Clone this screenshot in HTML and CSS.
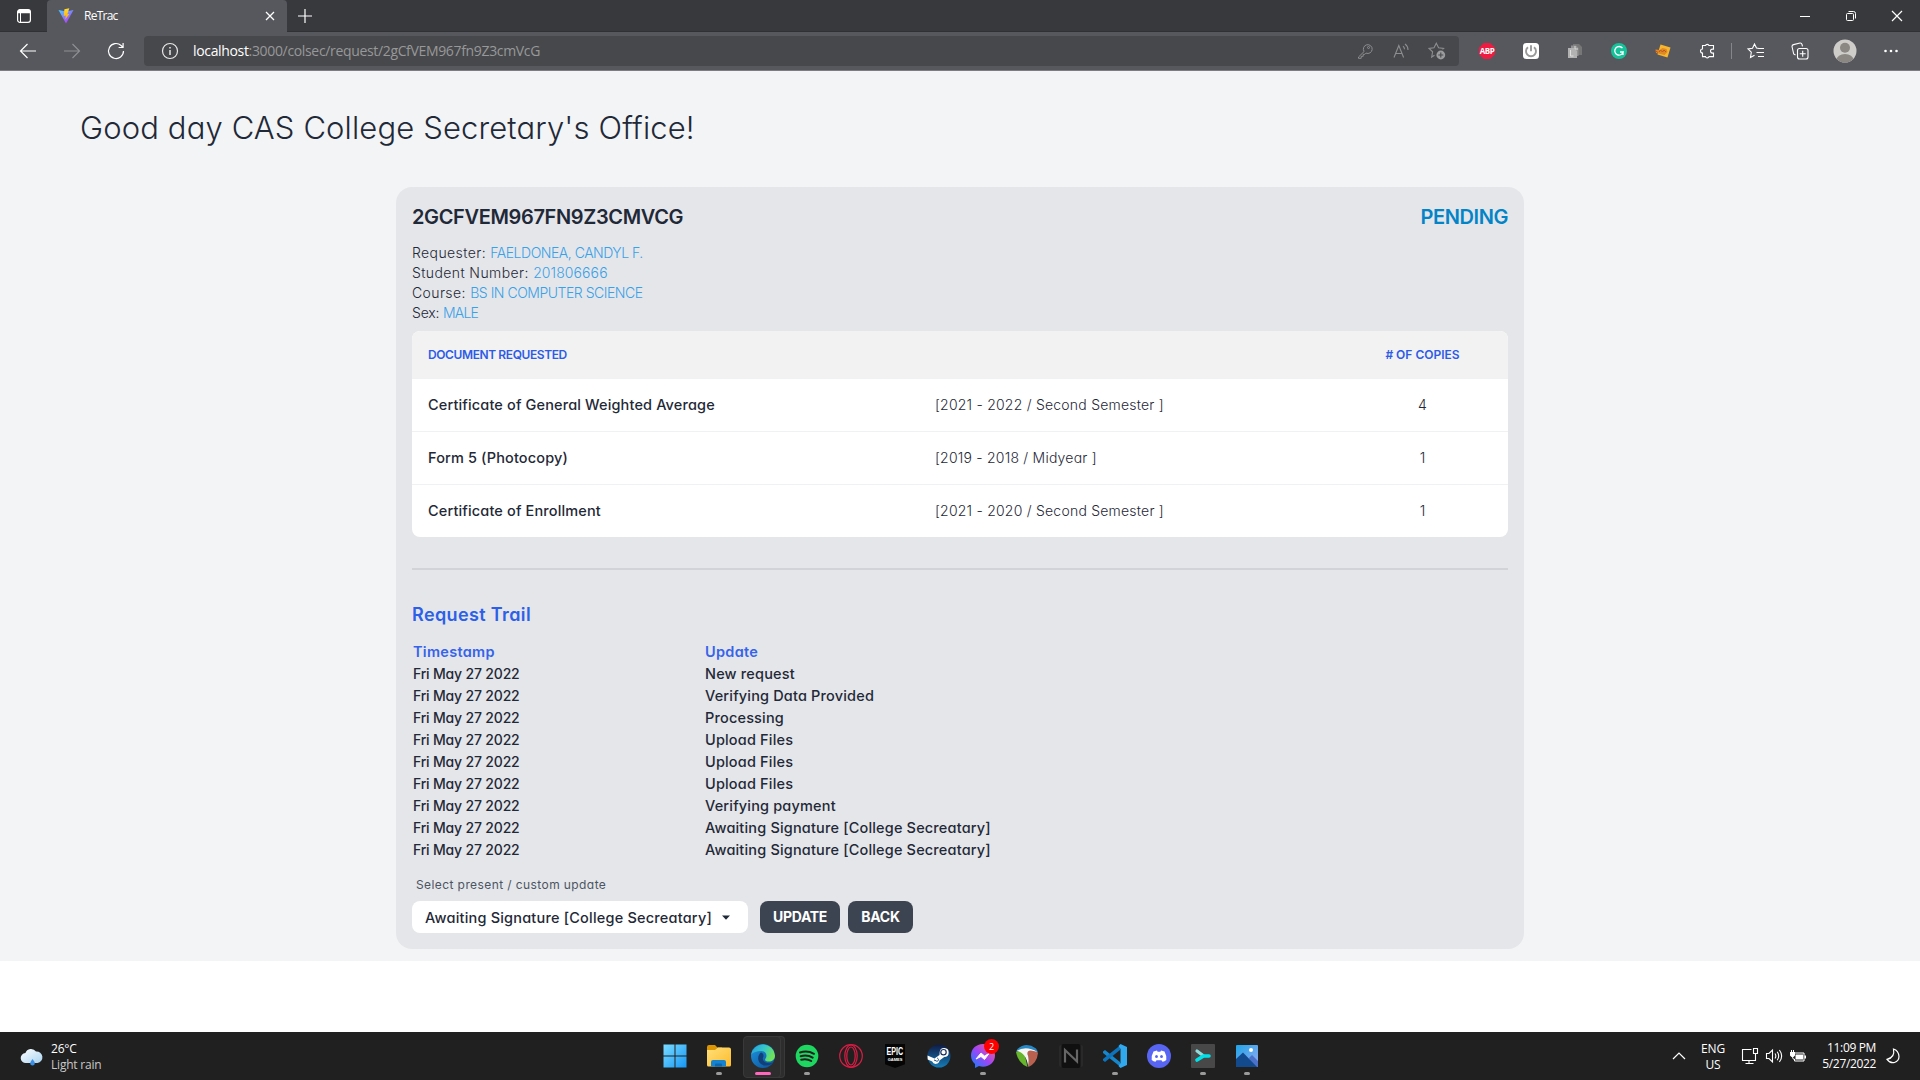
FILE: index.html
```html
<!DOCTYPE html>
<html lang="en">
<head>
<meta charset="utf-8">
<title>ReTrac</title>
<link rel="stylesheet" href="styles.css">
</head>
<body>
<header class="browser">
  <div class="tabstrip">
    <div class="tab-actions"><svg width="16" height="16" viewBox="0 0 16 16"><rect x="1.6" y="1.6" width="12.8" height="12.8" rx="2.4" fill="none" stroke="#fff" stroke-width="1.2"/><path d="M1.5 5.2V4a2.500 2.500 0 0 1 2.500-2.500h8a2.500 2.500 0 0 1 2.500 2.500v1.200z" fill="#fff"/><path d="M4.500 5v9.500" stroke="#fff"/></svg></div>
    <div class="tab">
      <svg width="16" height="16" viewBox="0 0 16 16"><defs><linearGradient id="vite" x1="0" y1="0" x2="0.7" y2="1"><stop offset="0" stop-color="#41d1ff"/><stop offset="1" stop-color="#bd34fe"/></linearGradient><linearGradient id="bolt" x1="0" y1="0" x2="0" y2="1"><stop offset="0" stop-color="#ffdd35"/><stop offset="1" stop-color="#ffa800"/></linearGradient></defs><path d="M.5 2 8 15.500 15.500 2 8 3.400z" fill="url(#vite)"/><path d="M11.300.3 6.400 1.300 5.700 8l2.100-.4-.5 3.900 4-5.500-2 .3z" fill="url(#bolt)"/></svg>
      <span class="tab-title">ReTrac</span>
      <svg class="tab-close" width="10" height="10" viewBox="0 0 10 10"><path d="m1 1 8 8M9 1 1 9" stroke="#fff" stroke-width="1.300"/></svg>
    </div>
    <div class="new-tab"><svg width="16" height="16" viewBox="0 0 16 16"><path d="M8 1v14M1 8h14" stroke="#fff" stroke-width="1.200"/></svg></div>
    <div class="window-controls">
      <span><svg width="12" height="12" viewBox="0 0 12 12"><path d="M1 6.500h10" stroke="#fff"/></svg></span>
      <span><svg width="12" height="12" viewBox="0 0 12 12" fill="none" stroke="#fff"><rect x="1.500" y="3.500" width="7" height="7" rx="1"/><path d="M3.500 1.500h5a2 2 0 0 1 2 2v5"/></svg></span>
      <span><svg width="12" height="12" viewBox="0 0 12 12"><path d="m1 1 10 10M11 1 1 11" stroke="#fff" stroke-width="1.200"/></svg></span>
    </div>
  </div>
  <div class="toolbar">
    <nav class="nav-buttons">
      <span><svg width="18" height="16" viewBox="0 0 18 16" fill="none" stroke="#fff" stroke-width="1.200"><path d="M17 8H1.500M8.500 1l-7 7 7 7"/></svg></span>
      <span><svg width="18" height="16" viewBox="0 0 18 16" fill="none" stroke="#8e8f93" stroke-width="1.200"><path d="M1 8h15.500M9.500 1l7 7-7 7"/></svg></span>
      <span><svg width="18" height="18" viewBox="0 0 18 18" fill="none" stroke="#fff" stroke-width="1.200"><path d="M16.500 9a7.500 7.500 0 1 1-2.400-5.500l2 2M16.100 1v4.500h-4.500"/></svg></span>
    </nav>
    <div class="address">
      <svg class="info" width="18" height="18" viewBox="0 0 18 18" fill="none" stroke="#e8e8e8" stroke-width="1.200"><circle cx="9" cy="9" r="7.500"/><path d="M9 8v5M9 5v1.400" stroke-width="1.500"/></svg>
      <span class="url"><b>localhost</b>:3000/colsec/request/2gCfVEM967fn9Z3cmVcG</span>
      <div class="address-icons">
        <span><svg width="16" height="16" viewBox="0 0 16 16" fill="none" stroke="#8d8e90"><path d="M7.100 8.500 1.500 14v1.300h2.700v-2h2v-2h1.700l1.100-1.200A4.400 4.400 0 1 0 7.100 8.500z"/><circle cx="11.500" cy="4.500" r="1"/></svg></span>
        <span><svg width="18" height="16" viewBox="0 0 18 16" fill="none" stroke="#8d8e90" stroke-width="1.100"><path d="m2 14.500 4.800-12 4.800 12M3.600 10.500H10M11 3.200q1.500 1 1.500 3M13 1q3 2 3 6"/></svg></span>
        <span><svg width="18" height="18" viewBox="0 0 18 18"><path d="M6.500 13.200 3.700 15l.9-5.200L1 6.400l5-.7L8.300 1.200l2.300 4.500 5 .7-1.100 1" fill="none" stroke="#8d8e90" stroke-width="1.100"/><circle cx="12.800" cy="13" r="4.400" fill="#9b9c9e"/><path d="M12.800 10.500v5M10.300 13h5" stroke="#48494c" stroke-width="1.100"/></svg></span>
      </div>
    </div>
    <div class="extensions">
      <span><i class="abp">ABP</i></span>
      <span><svg width="16" height="16" viewBox="0 0 16 16"><rect width="16" height="16" rx="3.500" fill="#fff"/><path d="M5 4.200a5 5 0 1 0 6 0M8 2.200v6" fill="none" stroke="#999" stroke-width="1.900"/></svg></span>
      <span><svg width="16" height="16" viewBox="0 0 16 16"><path d="M6 1h6l3 3v8H6z" fill="#777"/><path d="M4 2.500h5l2.500 2.500v8H4z" fill="#929292"/><path d="M1 5h6l3 3v7H1z" fill="#b2b2b2"/><path d="M3.500 7v6h3M8 3v3h3" stroke="#dedede" fill="none"/></svg></span>
      <span><svg width="16" height="16" viewBox="0 0 16 16"><circle cx="8" cy="8" r="8" fill="#15c39a"/><path d="M11.500 5.200A4.300 4.300 0 1 0 12.200 9H9M12 12V9" fill="none" stroke="#fff" stroke-width="1.300"/></svg></span>
      <span><svg width="16" height="16" viewBox="0 0 16 16"><path d="m5.500 1.500 10 3-3 10-10-3z" fill="#f8b62c"/><path d="m.5 6.500 4 .5 3-2 4 1 1 3-3 3-4-1-4.500-1z" fill="#dd8a25"/><path d="m4 9 1.500-2 2 2 1.500-2 2 2M0 7.500l3 2" fill="none" stroke="#c2541e"/></svg></span>
      <span><svg width="16" height="16" viewBox="0 0 16 16"><path d="M3.500 2.500h3a1.800 1.500 0 0 1 3.500 0h4.500v3.600h-1a2 2 0 0 0 0 4h1v3.500H10a1.800 1.700 0 0 1-3.500 0h-3V10a2 2 0 0 1 0-4z" fill="none" stroke="#fff" stroke-width="1.100"/></svg></span>
    </div>
    <div class="browser-actions">
      <span><svg width="18" height="16" viewBox="0 0 18 16" fill="none" stroke="#fff" stroke-width="1.100"><path d="M12 5.500 9.500 5l-2-4-2 4.300-4.500.6 3.300 3.200-.8 5.400 4-2.300M11 5.500h6M9.500 9.500H17M11 13.500h6"/></svg></span>
      <span><svg width="18" height="18" viewBox="0 0 18 18" fill="none" stroke="#fff" stroke-width="1.100"><rect x="6.500" y="6.500" width="10.500" height="10.500" rx="2"/><path d="M11.700 8.700v6M8.700 11.700h6M4.500 13 2.700 12 1 4.500Q1 3 2.500 2.600L9 1q1.500-.2 2 1.300l.5 2"/></svg></span>
      <span><svg width="24" height="24" viewBox="0 0 24 24"><defs><clipPath id="avatar"><circle cx="12" cy="12" r="11.500"/></clipPath></defs><g clip-path="url(#avatar)"><path d="M0 0h24v24H0z" fill="#cfcdca"/><circle cx="12" cy="8.800" r="5" fill="#8b8783"/><ellipse cx="12" cy="21" rx="8.500" ry="6" fill="#8b8783"/></g></svg></span>
      <span><svg width="16" height="4" viewBox="0 0 16 4" fill="#fff"><circle cx="2.500" cy="2" r="1.300"/><circle cx="8" cy="2" r="1.300"/><circle cx="13.500" cy="2" r="1.300"/></svg></span>
    </div>
  </div>
</header>

<main class="page">
  <h1 class="greeting">Good day CAS College Secretary's Office!</h1>
  <section class="card">
    <div class="card-head"><h2>2GCFVEM967FN9Z3CMVCG</h2><strong class="status">PENDING</strong></div>
    <div class="details">
      <p>Requester: <em>FAELDONEA, CANDYL F.</em></p>
      <p>Student Number: <em class="digits">201806666</em></p>
      <p>Course: <em>BS IN COMPUTER SCIENCE</em></p>
      <p class="sex">Sex: <em>MALE</em></p>
    </div>
    <div class="documents">
      <div class="doc-row doc-head"><span>DOCUMENT REQUESTED</span><span></span><span class="copies">#&nbsp;OF COPIES</span></div>
      <div class="doc-row"><span class="doc-name">Certificate of General Weighted Average</span><span>[2021 - 2022 / Second Semester ]</span><span class="copies">4</span></div>
      <div class="doc-row"><span class="doc-name">Form 5 (Photocopy)</span><span>[2019 - 2018 / Midyear ]</span><span class="copies">1</span></div>
      <div class="doc-row"><span class="doc-name">Certificate of Enrollment</span><span>[2021 - 2020 / Second Semester ]</span><span class="copies">1</span></div>
    </div>
    <div class="divider"></div>
    <h3 class="trail-title">Request Trail</h3>
    <div class="trail">
      <b>Timestamp</b><b>Update</b>
      <time>Fri May 27 2022</time><span>New request</span>
      <time>Fri May 27 2022</time><span>Verifying Data Provided</span>
      <time>Fri May 27 2022</time><span>Processing</span>
      <time>Fri May 27 2022</time><span>Upload Files</span>
      <time>Fri May 27 2022</time><span>Upload Files</span>
      <time>Fri May 27 2022</time><span>Upload Files</span>
      <time>Fri May 27 2022</time><span>Verifying payment</span>
      <time>Fri May 27 2022</time><span>Awaiting Signature [College Secreatary]</span>
      <time>Fri May 27 2022</time><span>Awaiting Signature [College Secreatary]</span>
    </div>
    <p class="field-label">Select present / custom update</p>
    <div class="actions">
      <div class="select"><span>Awaiting Signature [College Secreatary]</span><svg width="8" height="5" viewBox="0 0 8 5"><path d="M0 .5h8L4 4.800z" fill="#1f2937"/></svg></div>
      <button class="btn btn-update">UPDATE</button>
      <button class="btn btn-back">BACK</button>
    </div>
  </section>
</main>

<footer class="taskbar">
  <div class="weather">
    <svg width="24" height="20" viewBox="0 0 24 20"><defs><linearGradient id="cloud" x1="0" y1="0" x2="1" y2="1"><stop offset="0" stop-color="#fff"/><stop offset="1" stop-color="#a9d3f0"/></linearGradient></defs><path d="M6 16a5 5 0 0 1-.6-10A6 6 0 0 1 16 4.500 5.800 5.800 0 0 1 17.500 16z" fill="url(#cloud)"/><path d="M12.500 12q2.500 3 2.300 4.300a2.300 2.300 0 0 1-4.600 0Q10.200 15 12.500 12z" fill="#3b8fe4"/></svg>
    <p><span>26°C</span><span class="muted">Light rain</span></p>
  </div>
  <div class="apps">
    <span class="app"><svg width="24" height="24" viewBox="0 0 24 24"><defs><linearGradient id="win" x1="0" y1="0" x2="1" y2="1"><stop offset="0" stop-color="#7bdcff"/><stop offset="1" stop-color="#1597f5"/></linearGradient></defs><path d="M.5.500h11v11H.5zM12.500.500h11v11h-11zM.5 12.500h11v11H.5zM12.500 12.500h11v11h-11z" fill="url(#win)"/></svg></span>
    <span class="app running"><svg width="24" height="24" viewBox="0 0 24 24"><defs><linearGradient id="folder" x1="0" y1="0" x2="1" y2="1"><stop offset="0" stop-color="#ffe07a"/><stop offset="1" stop-color="#fdbb2c"/></linearGradient></defs><path d="M0 3q0-2 2-2h6l2.500 2.500H15V8H0z" fill="#dc9503"/><path d="M0 6h8l3-2.500h11q2 0 2 2V21q0 1.500-1.500 1.500h-21Q0 22.500 0 21z" fill="url(#folder)"/><path d="M4 22.500V18q0-2 2-2h11q2 0 2 2v4.500z" fill="#1683d1"/><path d="M8 22.500v-2q0-1 1-1h5q1 0 1 1v2z" fill="#0b67ad"/></svg></span>
    <span class="app running active"><svg width="24" height="24" viewBox="0 0 24 24"><defs><linearGradient id="edge1" x1="0" y1="0" x2="1" y2=".4"><stop offset="0" stop-color="#269edd"/><stop offset=".55" stop-color="#35c6c9"/><stop offset="1" stop-color="#6de25b"/></linearGradient><linearGradient id="edge2" x1="0" y1="0" x2="1" y2="1"><stop offset="0" stop-color="#1c96df"/><stop offset="1" stop-color="#0c4e98"/></linearGradient></defs><circle cx="12" cy="12" r="12" fill="url(#edge2)"/><path d="M.2 10.500A12 12 0 0 1 24 11.500c0 4-3 6-6 6-3.500 0-4.500-1.500-3.600-2.700 2.600-3.500.2-7.800-4.200-7.800C6 7 2 8.500.2 10.500z" fill="url(#edge1)"/><path d="M10 8.500c-3 2-4.500 8 0 11.500 4 3 9.500 1.500 12.500-1.700-2.500 1.200-6 1.400-8.300 0-2-1.300-3-3-2-5 .8-1.600.2-4.500-2.200-4.800z" fill="#123f77"/><path d="M22.700 17.800q1 .2.300 1l-1.800 1.800 3 1V15z" fill="#2d2d2e"/></svg></span>
    <span class="app running"><svg width="24" height="24" viewBox="0 0 24 24"><circle cx="12" cy="12" r="11.300" fill="#1ed760"/><path d="M5 8.500q7.500-2.300 14 1.300M5.700 12.200q6.500-1.800 12 1.400M6.200 15.700q5.500-1.500 10 1.300" fill="none" stroke="#202020" stroke-width="2" stroke-linecap="round"/></svg></span>
    <span class="app"><svg width="24" height="24" viewBox="0 0 24 24" fill="none" stroke="#da1d45" stroke-width="1.200"><circle cx="12" cy="12" r="11.300"/><ellipse cx="12" cy="12" rx="6.200" ry="11"/><ellipse cx="12" cy="12" rx="4.200" ry="9"/></svg></span>
    <span class="app"><span class="epic"><b>EPIC</b><small>GAMES</small></span></span>
    <span class="app"><svg width="24" height="24" viewBox="0 0 24 24"><defs><linearGradient id="steam" x1="0" y1="0" x2="0" y2="1"><stop offset="0" stop-color="#101b45"/><stop offset="1" stop-color="#147cb5"/></linearGradient></defs><circle cx="12" cy="12" r="11.500" fill="url(#steam)"/><path d="m.5 11.500 7 3 5-3.500.2-3a4.500 4.500 0 1 1 4.500 5l-4.700 3.500a3.800 3.800 0 0 1-7.300 1L.7 15.500z" fill="#fff"/><circle cx="16.500" cy="8.200" r="2.700" fill="#fff" stroke="#17315f" stroke-width="1.200"/><path d="m7 16 2 .8a1.500 1.500 0 1 0 1-2.600" fill="none" stroke="#17548b"/></svg></span>
    <span class="app running"><svg width="24" height="24" viewBox="0 0 24 24"><defs><linearGradient id="msgr" x1="0" y1="1" x2="1" y2="0"><stop offset="0" stop-color="#0a83ff"/><stop offset=".5" stop-color="#a044f5"/><stop offset="1" stop-color="#ff6874"/></linearGradient></defs><path d="M12 0C5 0 0 5 0 11.500c0 3.500 1.500 6.400 4 8.500v4l4-2q2 .7 4 .7c7 0 12-4.800 12-11.200S19 0 12 0z" fill="url(#msgr)"/><path d="m5 15 5-6 3.500 3L18 9.500l-4.500 6-3.500-3z" fill="#fff" stroke="#fff"/></svg><i class="badge">2</i></span>
    <span class="app"><svg width="24" height="24" viewBox="0 0 24 24"><path d="M2.500 5Q11-2.500 21 4.500q2 2 1.500 5L17 7Q8 3 1 8z" fill="#2589c7"/><path d="M1 8q6-2.500 8.500 1.500L12.500 23Q3 19 1 8z" fill="#66b52d"/><path d="M10 5.500q9-1 13 3.500-1 10-9.500 14Q15 12 10 5.500z" fill="#b9614e"/><path d="M1.500 7Q11 1 22.500 8 11.500 4 12.500 10q2 5 .7 13Q11.500 8.500 1.500 7z" fill="#f6f6f3"/></svg></span>
    <span class="app"><svg width="24" height="24" viewBox="0 0 24 24"><rect x="0" y="1" width="24" height="22" rx="2" fill="#292929"/><rect x="2.500" width="19" height="24" rx="2" fill="#101010"/><path d="M6 18.500V6l12 11.500V5.500" fill="none" stroke="#666" stroke-width="2.200"/></svg></span>
    <span class="app running"><svg width="24" height="24" viewBox="0 0 24 24"><path d="M0 7.500 2 6l15 12v4.500L0 9z" fill="#1687cb"/><path d="M0 16.500 2 18 17 6V1.500L0 15z" fill="#0d73ba"/><path d="m17.500 0 6.500 3v18l-6.500 3-2-2 2-3V5l-2-3z" fill="#31a9ef"/></svg></span>
    <span class="app"><svg width="24" height="24" viewBox="0 0 24 24"><circle cx="12" cy="12" r="12" fill="#5865f2"/><path d="M6.500 7.500 10 6.500l.6 1.200h2.800l.6-1.200 3.500 1q2.300 4 1.800 8.500-1.800 1.500-3.800 1.800l-1-1.500h-5l-1 1.500Q6.500 17.500 4.700 16q-.5-4.500 1.800-8.500z" fill="#fff"/><ellipse cx="9.500" cy="12.500" rx="1.400" ry="1.600" fill="#5865f2"/><ellipse cx="14.500" cy="12.500" rx="1.400" ry="1.600" fill="#5865f2"/></svg></span>
    <span class="app running"><svg width="24" height="24" viewBox="0 0 24 24"><rect width="24" height="24" rx="1" fill="#484848"/><path d="m6 7 6 4.500" stroke="#8fdcda" stroke-width="3.200" stroke-linecap="round"/><path d="m6 16 6.500-4H18" fill="none" stroke="#00e2ea" stroke-width="3.600" stroke-linecap="round"/></svg></span>
    <span class="app running"><svg width="24" height="24" viewBox="0 0 24 24"><defs><linearGradient id="photo" x1="0" y1="0" x2="1" y2="1"><stop offset="0" stop-color="#1ea5e8"/><stop offset="1" stop-color="#99aaf3"/></linearGradient></defs><rect x="1" y="1" width="22" height="22" rx="1" fill="url(#photo)"/><path d="m14 14 3-3 6 6v6h-6z" fill="#4b72c8"/><path d="M1 15 8 8.500 22 23H1z" fill="#134a8e"/><circle cx="16" cy="6" r="2" fill="#fff"/></svg></span>
  </div>
  <div class="tray">
    <svg class="chevron" width="14" height="8" viewBox="0 0 14 8"><path d="m1 7 6-6 6 6" fill="none" stroke="#fff" stroke-width="1.200"/></svg>
    <p class="language"><span>ENG</span><span>US</span></p>
    <div class="tray-icons">
      <svg width="18" height="18" viewBox="0 0 18 18" fill="none" stroke="#fff" stroke-width="1.100"><path d="M10.500 2.500h-9v11h13V8.500M8 13.500v3M4.500 16.500h8M12.500 1.500h4v5h-4zM14.500 6.500v3"/></svg>
      <svg width="18" height="16" viewBox="0 0 18 16" fill="none" stroke="#fff" stroke-width="1.100"><path d="M1.500 5.500H4L7.500 2v12L4 10.500H1.500zM10 5.500q1.700 2.500 0 5M12.200 3.800q3 4.200 0 8.400M14.400 2q4.500 6 0 12"/></svg>
      <svg width="18" height="16" viewBox="0 0 18 16"><path d="M5.500 6.500V5h9.500v8H5.500v-2" fill="none" stroke="#fff"/><path d="M6.500 6.500h7.500v5H6.500zM15.500 7.500H17v3h-1.500zM1 4h5v3.500L4.500 9h-2L1 7.500z" fill="#fff"/><path d="M2.500 2v2M4.500 2v2M3.500 9q0 2.500 2.500 2.500" stroke="#fff" fill="none"/></svg>
    </div>
    <p class="clock"><span>11:09 PM</span><span>5/27/2022</span></p>
    <svg class="moon" width="14" height="16" viewBox="0 0 14 16"><path d="M7.500 1q1.700 8.500-6.500 10.300Q4 15.500 8.500 14.500 13 13 13 8.500 12.500 2.500 7.500 1z" fill="none" stroke="#fff" stroke-width="1.200"/></svg>
  </div>
</footer>
</body>
</html>
```
FILE: styles.css
```css
* { box-sizing: border-box; margin: 0; padding: 0; }
body {
  width: 1920px; height: 1080px; overflow: hidden;
  display: flex; flex-direction: column;
  background: #fff; color: #1f2937;
  font-family: Inter, "Open Sans", sans-serif;
  font-feature-settings: "cv11";
  font-size: 14px; line-height: 20px;
}
svg { display: block; flex: none; overflow: visible; }
em, i { font-style: normal; }
p, span, b, time, h1, h2, h3 { white-space: nowrap; }

/* Browser chrome */
.browser { height: 71px; flex: none; font-family: "Open Sans", sans-serif; color: #fff; background: #57585d; border-bottom: 1px solid #7d7c82; }
.tabstrip { height: 32px; display: flex; background: #38393c; border-bottom: 1px solid #303134; }
.tab-actions { width: 47px; display: flex; align-items: center; justify-content: center; }
.tab { width: 240px; height: 32px; padding: 0 12px 0 11px; display: flex; align-items: center; background: #57585d; border-radius: 4px 4px 0 0; }
.tab-title { margin-left: 10px; font-size: 12px; letter-spacing: -0.75px; }
.tab-close { margin-left: auto; }
.new-tab { width: 35px; display: flex; align-items: center; justify-content: center; }
.window-controls { margin-left: auto; display: flex; }
.window-controls span { width: 46px; display: flex; align-items: center; justify-content: center; }
.toolbar { height: 38px; display: flex; align-items: center; }
.nav-buttons { width: 144px; padding-left: 6px; display: flex; }
.nav-buttons span, .extensions span, .browser-actions span { width: 44px; display: flex; align-items: center; justify-content: center; }
.address { width: 1315px; height: 30px; padding: 0 4px 0 17px; display: flex; align-items: center; background: #47484b; border-radius: 4px; }
.url { margin-left: 14px; font-size: 14px; letter-spacing: -0.34px; color: #97989a; }
.url b { font-weight: 400; color: #fff; }
.address-icons { margin-left: auto; display: flex; }
.address-icons span { width: 36px; display: flex; justify-content: center; align-items: center; }
.extensions { width: 267px; margin-left: 6px; height: 16px; display: flex; align-items: center; border-right: 1px solid #85868a; }
.extensions .abp {
  width: 16px; height: 16px; background: #ef1b40; color: #fff;
  font: 700 8px/16px "Open Sans", sans-serif; letter-spacing: -0.4px; text-align: center;
  clip-path: polygon(30% 0, 70% 0, 100% 30%, 100% 70%, 70% 100%, 30% 100%, 0 70%, 0 30%);
}
.browser-actions { margin-left: 2px; display: flex; align-items: center; }
.browser-actions span:nth-child(n+3) { width: 46px; }

/* Request page */
.page { height: 890px; flex: none; padding: 37px 80px 0; background: #f3f4f6; }
.greeting { font-size: 31px; line-height: 40px; font-weight: 300; letter-spacing: 0.13px; }
.card { width: 1128px; height: 762px; margin: 39px auto 0; padding: 16px; background: #e5e6ea; border-radius: 16px; }
.card-head { height: 28px; display: flex; justify-content: space-between; font-size: 20px; line-height: 28px; }
.card-head h2 { font-size: 20px; font-weight: 600; letter-spacing: -0.36px; }
.status { font-weight: 600; letter-spacing: -0.4px; color: #0284c7; }
.details { margin: 12px 0 8px; font-weight: 300; letter-spacing: 0.4px; }
.details em { color: #38a1e8; letter-spacing: -0.48px; }
.details .digits { letter-spacing: 0.1px; }
.details .sex { letter-spacing: -0.2px; }
.details .sex em { letter-spacing: -0.8px; }
.documents { border-radius: 8px; overflow: hidden; background: #fff; }
.doc-row { height: 53px; padding-left: 16px; display: grid; grid-template-columns: 507px 402px 1fr; align-items: center; border-top: 1px solid #f0f1f2; font-weight: 300; letter-spacing: 0.22px; }
.doc-head { height: 47px; background: #f2f2f2; color: #2d5be8; font-size: 12px; font-weight: 600; letter-spacing: -0.4px; border: 0; }
.doc-head .copies { letter-spacing: 0; }
.doc-name { font-size: 14.500px; font-weight: 450; letter-spacing: 0.14px; }
.copies { text-align: center; }
.divider { height: 2px; margin: 31px 0; background: #d1d3d8; }
.trail-title { height: 28px; font-size: 18px; line-height: 28px; font-weight: 600; letter-spacing: 0.38px; color: #2d5fe9; }
.trail { margin-top: 12px; padding-left: 1px; display: grid; grid-template-columns: 292px 1fr; grid-auto-rows: 22px; font-size: 14.500px; line-height: 22px; font-weight: 450; letter-spacing: 0.17px; }
.trail b { color: #3563eb; font-weight: 600; letter-spacing: 0.3px; }
.trail time { font-size: 14px; letter-spacing: -0.18px; }
.field-label { margin-top: 14px; padding-left: 4px; font-size: 12px; line-height: 20px; letter-spacing: 0.41px; color: #4b5563; }
.actions { margin-top: 6px; display: flex; }
.select { width: 336px; height: 32px; padding: 1px 18px 0 13px; display: flex; align-items: center; justify-content: space-between; background: #fff; border-radius: 8px; font-size: 14.500px; font-weight: 550; letter-spacing: 0.2px; }
.btn { height: 32px; border: 0; border-radius: 8px; background: #3d4451; color: #fff; font: 700 14px/32px Inter, sans-serif; letter-spacing: -0.3px; }
.btn-update { width: 80px; margin-left: 12px; }
.btn-back { width: 65px; margin-left: 8px; }

/* Taskbar */
.taskbar { height: 48px; margin-top: auto; flex: none; display: grid; grid-template-columns: 653px 616px 1fr; background: #202020; color: #fff; font: 12px/16px "Open Sans", sans-serif; }
.weather { padding: 2px 0 0 20px; display: flex; align-items: center; gap: 7px; }
.taskbar p { display: flex; flex-direction: column; letter-spacing: -0.2px; }
.muted { color: #c9c9c9; }
.apps { display: flex; }
.app { position: relative; width: 44px; height: 48px; display: flex; align-items: center; justify-content: center; }
.app > svg, .epic { position: relative; }
.running::after { content: ""; position: absolute; left: 19px; top: 40px; width: 6px; height: 3px; border-radius: 2px; background: #9a9a9a; }
.active::before { content: ""; position: absolute; left: 2px; top: 4px; width: 36px; height: 40px; border: 1px solid #393939; border-radius: 4px; background: #2d2d2d; box-shadow: 4px 0 0 -1px #2d2d2d, 4px 0 0 #393939; }
.active::after { left: 14px; width: 16px; background: #ff67bd; }
.epic { width: 20px; height: 24px; padding-top: 2px; display: flex; flex-direction: column; align-items: center; background: #050505; color: #fff; clip-path: polygon(0 0, 100% 0, 100% 84%, 50% 100%, 0 84%); }
.epic b { font: 700 11px/11px "Liberation Sans", sans-serif; transform: scaleX(.65); letter-spacing: 0; }
.epic small { font: 700 4px/5px "Liberation Sans", sans-serif; }
.badge { position: absolute; left: 23px; top: 7px; width: 15px; height: 15px; border-radius: 50%; background: #f00; text-align: center; font-size: 9px; line-height: 15px; }
.tray { display: flex; align-items: center; justify-content: flex-end; padding-right: 20px; }
.language { width: 30px; margin: 2px 13px 0 12px; text-align: center; }
.tray-icons { display: flex; align-items: center; gap: 6px; }
.clock { width: 69px; text-align: right; }
.taskbar .clock { letter-spacing: -0.35px; }
.moon { margin-left: 10px; }
```
